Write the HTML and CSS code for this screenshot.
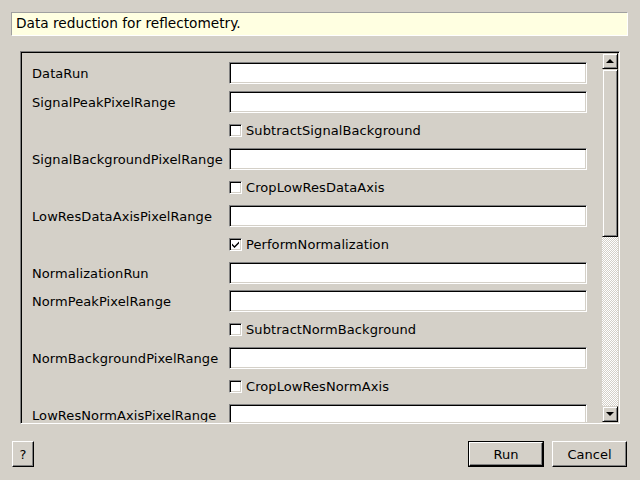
FILE: index.html
```html
<!DOCTYPE html>
<html>
<head>
<meta charset="utf-8">
<link rel="stylesheet" href="styles.css">
</head>
<body>
<div class="window">
  <div class="desc">Data reduction for reflectometry.</div>
  <div class="frame">
    <div class="content">
      <div class="grid">
        <div class="label">DataRun</div><div class="field"></div>
        <div class="label">SignalPeakPixelRange</div><div class="field"></div>
        <div></div><div class="cbrow"><span class="cb"></span>SubtractSignalBackground</div>
        <div class="label">SignalBackgroundPixelRange</div><div class="field"></div>
        <div></div><div class="cbrow"><span class="cb"></span>CropLowResDataAxis</div>
        <div class="label">LowResDataAxisPixelRange</div><div class="field"></div>
        <div></div><div class="cbrow"><span class="cb"><svg width="9" height="9" viewBox="0 0 9 9"><path d="M1 3.5 L3.5 6 L8 1.5 L8 3.5 L3.5 8 L1 5.5 Z" fill="#000"/></svg></span>PerformNormalization</div>
        <div class="label">NormalizationRun</div><div class="field"></div>
        <div class="label">NormPeakPixelRange</div><div class="field"></div>
        <div></div><div class="cbrow"><span class="cb"></span>SubtractNormBackground</div>
        <div class="label">NormBackgroundPixelRange</div><div class="field"></div>
        <div></div><div class="cbrow"><span class="cb"></span>CropLowResNormAxis</div>
        <div class="label">LowResNormAxisPixelRange</div><div class="field"></div>
      </div>
    </div>
    <div class="scrollbar">
      <div class="sbtn"><span class="up"></span></div>
      <div class="thumb"></div>
      <div class="track"></div>
      <div class="sbtn"><span class="down"></span></div>
    </div>
  </div>
  <div class="buttons">
    <div class="btn help">?</div>
    <div class="spacer"></div>
    <div class="btn default"><div class="inner">Run</div></div>
    <div class="btn cancel">Cancel</div>
  </div>
</div>
</body>
</html>
```
FILE: styles.css
```css
html, body {
  margin: 0;
  padding: 0;
  background: #d4d0c8;
}
body {
  font-family: "DejaVu Sans", sans-serif;
  font-size: 13px;
  color: #000;
}
.window {
  width: 640px;
  height: 480px;
  box-sizing: border-box;
  padding: 12px 12px 0 11px;
  display: flex;
  flex-direction: column;
}
.desc {
  height: 24px;
  box-sizing: border-box;
  background: #ffffe1;
  border-top: 1px solid #a0a0a0;
  border-left: 1px solid #a0a0a0;
  border-right: 1px solid #fff;
  border-bottom: 1px solid #fff;
  padding-left: 4px;
  font-size: 13.7px;
  line-height: 20px;
}
.frame {
  margin: 15px 0 0 9px;
  width: 600px;
  height: 373px;
  box-sizing: border-box;
  border-top: 1px solid #808080;
  border-left: 1px solid #808080;
  border-right: 1px solid #fff;
  border-bottom: 1px solid #fff;
  box-shadow: inset 1px 1px 0 #000, inset -1px -1px 0 #d4d0c8;
  padding: 1px;
  display: flex;
  overflow: hidden;
}
.content {
  flex: 1;
  overflow: hidden;
  padding: 9px 0 0 10px;
}
.grid {
  display: grid;
  grid-template-columns: 197px 358px;
  grid-auto-rows: 22px;
  row-gap: 6.5px;
  letter-spacing: 0.08px;
}
.label {
  line-height: 22px;
  padding-top: 1px;
  white-space: nowrap;
}
.field {
  box-sizing: border-box;
  background: #fff;
  border-top: 1px solid #808080;
  border-left: 1px solid #808080;
  border-right: 1px solid #fff;
  border-bottom: 1px solid #fff;
  box-shadow: inset 1px 1px 0 #000, inset -1px -1px 0 #d4d0c8;
}
.cbrow {
  display: flex;
  align-items: center;
  gap: 4px;
  white-space: nowrap;
}
.cb {
  width: 13px;
  height: 13px;
  box-sizing: border-box;
  background: #fff;
  border-top: 1px solid #808080;
  border-left: 1px solid #808080;
  border-right: 1px solid #fff;
  border-bottom: 1px solid #fff;
  box-shadow: inset 1px 1px 0 #000, inset -1px -1px 0 #d4d0c8;
  display: flex;
  align-items: center;
  justify-content: center;
}
.cb svg { display: block; }
.scrollbar {
  width: 16px;
  display: flex;
  flex-direction: column;
}
.sbtn, .thumb {
  box-sizing: border-box;
  background: #d4d0c8;
  border-top: 1px solid #d4d0c8;
  border-left: 1px solid #d4d0c8;
  border-right: 1px solid #000;
  border-bottom: 1px solid #000;
  box-shadow: inset 1px 1px 0 #fff, inset -1px -1px 0 #808080;
}
.sbtn {
  height: 16px;
  display: flex;
  align-items: center;
  justify-content: center;
}
.thumb {
  height: 168px;
}
.track {
  flex: 1;
  background: repeating-conic-gradient(#ffffff 0 25%, #d4d0c8 0 50%) 0 0 / 2px 2px;
}
.up {
  width: 0;
  height: 0;
  border-left: 4px solid transparent;
  border-right: 4px solid transparent;
  border-bottom: 4px solid #000;
}
.down {
  width: 0;
  height: 0;
  border-left: 4px solid transparent;
  border-right: 4px solid transparent;
  border-top: 4px solid #000;
}
.buttons {
  margin-top: 17px;
  height: 26px;
  display: flex;
  padding-left: 1px;
}
.spacer { flex: 1; }
.btn {
  box-sizing: border-box;
  height: 26px;
  background: #d4d0c8;
  border-top: 1px solid #fff;
  border-left: 1px solid #fff;
  border-right: 1px solid #000;
  border-bottom: 1px solid #000;
  box-shadow: inset -1px -1px 0 #808080;
  display: flex;
  align-items: center;
  justify-content: center;
}
.help {
  width: 22px;
}
.default {
  width: 76px;
  border: 1px solid #000;
  box-shadow: none;
  padding: 0;
  align-items: stretch;
  justify-content: stretch;
}
.default .inner {
  flex: 1;
  border-top: 1px solid #fff;
  border-left: 1px solid #fff;
  border-right: 1px solid #000;
  border-bottom: 1px solid #000;
  box-shadow: inset -1px -1px 0 #808080;
  display: flex;
  align-items: center;
  justify-content: center;
}
.cancel {
  width: 75px;
  margin-left: 8px;
  margin-right: 1px;
}
```
